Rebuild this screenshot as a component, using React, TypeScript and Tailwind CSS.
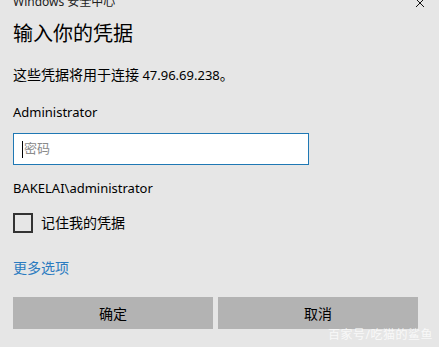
const font = { fontFamily: '"Segoe UI", "Noto Sans", "Noto Sans CJK SC", sans-serif' };

export default function App() {
  return (
    <div
      className="relative h-[347px] w-[439px] overflow-hidden bg-[#e6e6e6] text-[#000]"
      style={font}
    >
      {/* title bar */}
      <div className="-mt-[5px] flex h-[14px] items-center justify-between pl-[13px] pr-[14px]">
        <span className="text-[12px] leading-[14px] text-[#222]">Windows 安全中心</span>
        <svg width="10" height="10" viewBox="0 0 10 10" className="mt-[2px]">
          <path d="M1 1 L9 9 M9 1 L1 9" stroke="#111" strokeWidth="1" />
        </svg>
      </div>

      <div className="flex flex-col px-[13px]">
        <h1 className="mt-[11px] text-[20px] font-normal leading-[28px]">输入你的凭据</h1>

        <p className="mt-[18px] text-[13px] leading-[18px]">
          <span className="text-[14px]">这些凭据将用于连接</span> 47.96.69.238<span className="text-[14px]">。</span>
        </p>

        <p className="mt-[19px] text-[13px] leading-[18px]">Administrator</p>

        <div className="mt-[12px] flex h-[32px] w-[296px] items-center border border-[#1f78b4] bg-white pl-[8px]">
          <span className="mr-[1px] h-[17px] w-[1px] bg-black" />
          <span className="text-[13px] text-[#8a8a8a]">密码</span>
        </div>

        <p className="mt-[14px] text-[13px] leading-[18px]">BAKELAI\administrator</p>

        <label className="mt-[16px] flex items-center gap-[8px]">
          <span className="h-[20px] w-[20px] border-2 border-[#333]" />
          <span className="text-[14px] leading-[18px]">记住我的凭据</span>
        </label>

        <a className="mt-[26px] text-[14px] leading-[18px] text-[#2a7bc0]">更多选项</a>

        <div className="mt-[20px] flex gap-[5px]">
          <button className="h-[32px] w-[200px] bg-[#b3b3b3] text-[14px]">确定</button>
          <button className="h-[32px] w-[200px] bg-[#b3b3b3] text-[14px]">取消</button>
        </div>
      </div>

      {/* watermark */}
      <span className="absolute bottom-[3px] right-[6px] text-[12px] tracking-[0.5px] text-white/75">百家号/吃猫的鲨鱼</span>
    </div>
  );
}
